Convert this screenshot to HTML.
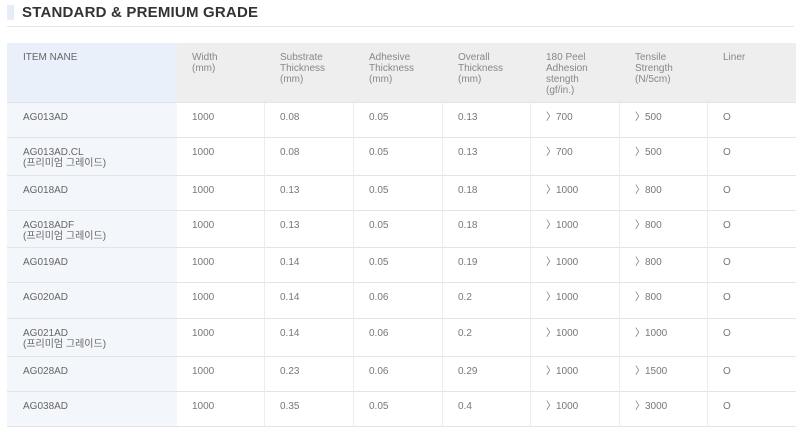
<!DOCTYPE html>
<html><head><meta charset="utf-8"><style>
body{margin:0;width:800px;height:436px;background:#fff;font-family:"Liberation Sans","Noto Sans CJK KR",sans-serif;overflow:hidden;position:relative}
.bar{position:absolute;left:7px;top:5px;width:7px;height:15px;background:#e6edf7}
.title{position:absolute;left:22px;top:4px;font-size:15px;font-weight:bold;color:#333;letter-spacing:0.2px}
.hl{position:absolute;left:7px;top:26px;width:787px;height:1px;background:#e6e6e6}
.c{position:absolute;font-size:10px;line-height:11px;color:#777;box-sizing:border-box;padding-left:15px;padding-top:9px;border-bottom:1px solid #e4e4e4;border-right:1px solid #ececec}
.h{background:#eeeeee;color:#888;padding-top:9px}
.f{background:#f3f6fb;padding-left:16px;color:#666}
.fh{background:#eaf0f9}
</style></head><body>
<div class="bar"></div><div class="title">STANDARD &amp; PREMIUM GRADE</div><div class="hl"></div>
<div id="t"></div>
<script>
var cols=[7,177,265,354,443,531,620,708,796];
var rows=[43,103,138,176,211,248,283,319,357,392,427];
var head=["ITEM NANE","Width<br>(mm)","Substrate<br>Thickness<br>(mm)","Adhesive<br>Thickness<br>(mm)","Overall<br>Thickness<br>(mm)","180 Peel<br>Adhesion<br>stength<br>(gf/in.)","Tensile<br>Strength<br>(N/5cm)","Liner"];
var P="<br>(프리미엄 그레이드)";
var d=[["AG013AD","1000","0.08","0.05","0.13","〉700","〉500","O"],
["AG013AD.CL"+P,"1000","0.08","0.05","0.13","〉700","〉500","O"],
["AG018AD","1000","0.13","0.05","0.18","〉1000","〉800","O"],
["AG018ADF"+P,"1000","0.13","0.05","0.18","〉1000","〉800","O"],
["AG019AD","1000","0.14","0.05","0.19","〉1000","〉800","O"],
["AG020AD","1000","0.14","0.06","0.2","〉1000","〉800","O"],
["AG021AD"+P,"1000","0.14","0.06","0.2","〉1000","〉1000","O"],
["AG028AD","1000","0.23","0.06","0.29","〉1000","〉1500","O"],
["AG038AD","1000","0.35","0.05","0.4","〉1000","〉3000","O"]];
var all=[head].concat(d),h="";
for(var r=0;r<all.length;r++)for(var c=0;c<8;c++){
var cl="c"+(r==0?" h":"")+(c==0?" f":"")+(r==0&&c==0?" fh":"");
var br=(c==0||c==7||r==0)?"border-right:none;":"";
h+='<div class="'+cl+'" style="'+br+'left:'+cols[c]+'px;top:'+rows[r]+'px;width:'+(cols[c+1]-cols[c])+'px;height:'+(rows[r+1]-rows[r])+'px">'+all[r][c]+'</div>';}
document.getElementById("t").innerHTML=h;
</script>
</body></html>
